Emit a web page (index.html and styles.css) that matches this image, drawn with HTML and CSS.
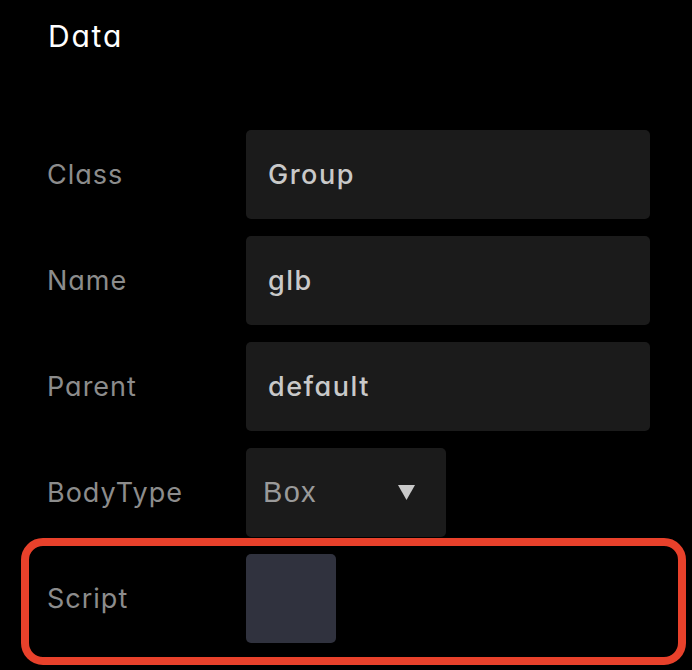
FILE: index.html
```html
<!DOCTYPE html>
<html lang="en">
<head>
<meta charset="utf-8">
<title>Data</title>
<link rel="stylesheet" href="styles.css">
</head>
<body>
<div class="panel">
  <h2 class="title">Data</h2>
  <div class="form">
    <div class="row">
      <span class="label">Class</span>
      <div class="field">Group</div>
    </div>
    <div class="row">
      <span class="label">Name</span>
      <div class="field">glb</div>
    </div>
    <div class="row">
      <span class="label">Parent</span>
      <div class="field">default</div>
    </div>
    <div class="row">
      <span class="label">BodyType</span>
      <div class="select">
        <span class="select-value">Box</span>
        <svg class="caret" width="17" height="15" viewBox="0 0 17 15"><polygon points="0,0 17,0 8.5,15" fill="#c9c9c9"/></svg>
      </div>
    </div>
    <div class="row highlight">
      <span class="label">Script</span>
      <div class="swatch"></div>
    </div>
  </div>
</div>
</body>
</html>
```

FILE: styles.css
```css
html, body {
  margin: 0;
  padding: 0;
  background: #000;
}

body {
  width: 692px;
  height: 670px;
  overflow: hidden;
  font-family: "Inter", "Noto Sans", sans-serif;
  font-feature-settings: "cv11" 1;
}

.panel {
  padding: 18px 42px 0 47px;
}

.title {
  margin: 0 0 76px 1px;
  font-size: 30px;
  line-height: 36px;
  font-weight: 400;
  color: #ffffff;
  letter-spacing: 1.8px;
}

.form {
  display: flex;
  flex-direction: column;
  gap: 17px;
}

.row {
  display: grid;
  grid-template-columns: 199px 1fr;
  align-items: center;
  height: 89px;
}

.label {
  font-size: 27px;
  color: #8c8c8c;
  letter-spacing: 1px;
}

.field {
  height: 89px;
  box-sizing: border-box;
  background: #1b1b1b;
  border-radius: 5px;
  padding-left: 22px;
  display: flex;
  align-items: center;
  font-size: 27px;
  font-weight: 500;
  color: #c9c9c9;
  letter-spacing: 1.5px;
}

.select {
  width: 200px;
  height: 89px;
  box-sizing: border-box;
  background: #1b1b1b;
  border-radius: 5px;
  padding: 0 31px 0 17px;
  display: flex;
  align-items: center;
}

.select-value {
  font-family: "Liberation Sans", Arial, sans-serif;
  font-size: 29px;
  color: #9a9a9a;
  letter-spacing: 1.3px;
}

.caret {
  margin-left: auto;
  display: block;
}

.swatch {
  width: 90px;
  height: 89px;
  background: #30323e;
  border-radius: 5px;
}

.highlight {
  margin: -16px -36px -22px -26px;
  padding: 8px 28px 14px 18px;
  border: 8px solid #e8412b;
  border-radius: 22px;
  height: auto;
  grid-template-rows: 89px;
}
```
